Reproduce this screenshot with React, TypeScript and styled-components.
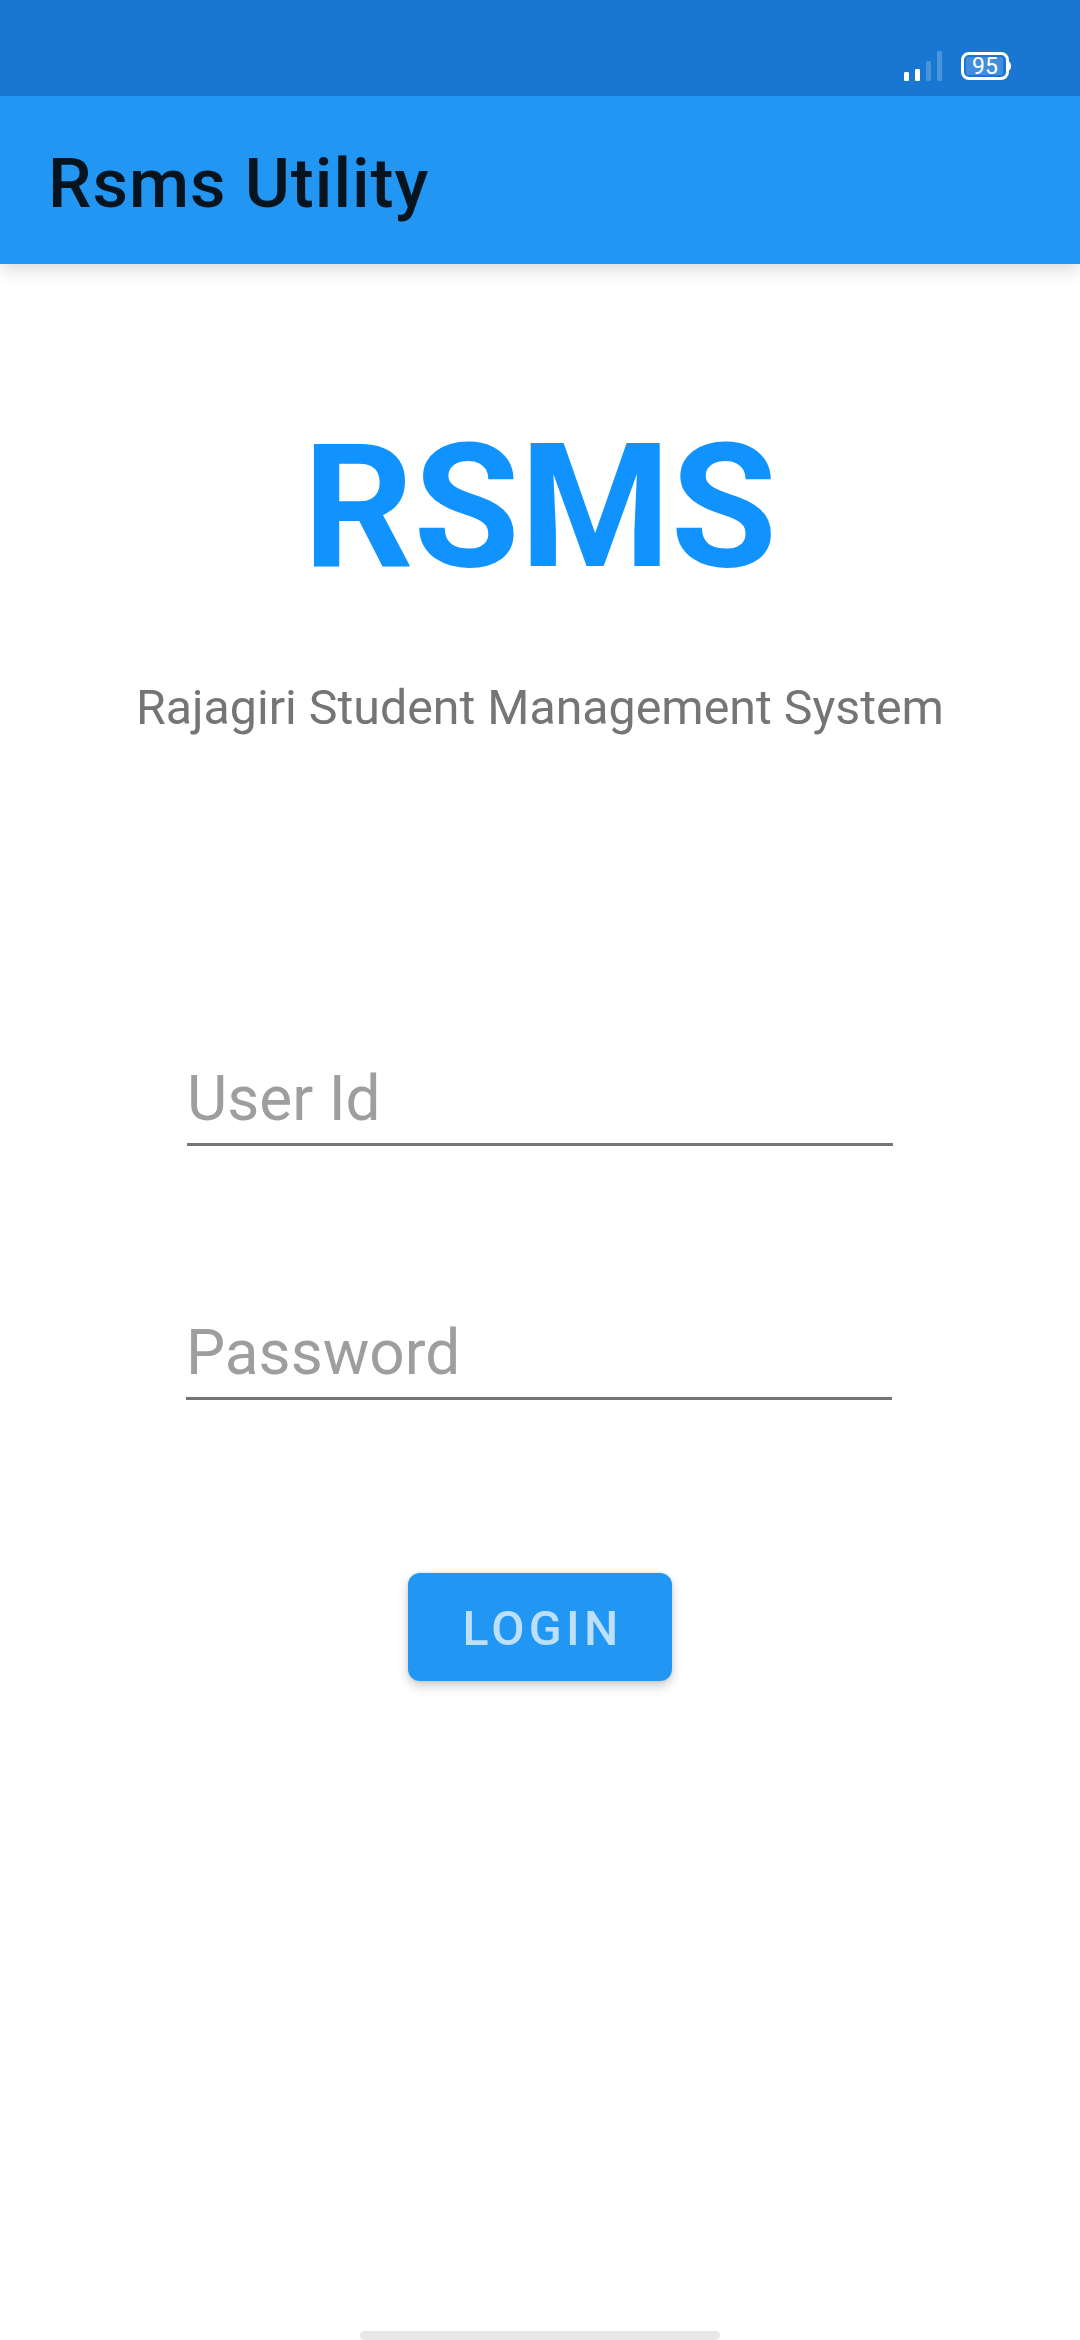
import React from "react";
import styled, { createGlobalStyle } from "styled-components";

const Global = createGlobalStyle`
  * { box-sizing: border-box; }
  body { margin: 0; background: #fff; font-family: Roboto, "Liberation Sans", sans-serif; }
`;
const Screen = styled.div`
  width: 1080px; height: 2340px; display: flex; flex-direction: column;
  background: #fff; overflow: hidden;
`;
const StatusBar = styled.header`
  position: relative; z-index: 1;
  height: 96px; background: #1976d2; display: flex; justify-content: flex-end;
  padding: 51px 69px 0 0; gap: 19px;
`;
const Icon = styled.svg`
  display: block; flex: none;
`;
const AppBar = styled.div`
  height: 168px; background: #2196f3; padding: 0 48px; display: flex; align-items: center;
  box-shadow: 0 4px 18px rgba(0,0,0,.17);
`;
const Title = styled.h1`
  margin: 7px 0 0; font-size: 69px; font-weight: 500; letter-spacing: 1px; line-height: 81px; color: #05141f;
`;
const Main = styled.main`
  flex: 1; display: flex; flex-direction: column; align-items: center;
`;
const Brand = styled.div`
  margin-top: 142px; font-size: 172.5px; line-height: 202px; font-weight: 700; color: #1193ff;
`;
const Subtitle = styled.p`
  margin: 71px 0 0; font-size: 48.3px; line-height: 57px; color: #757575;
`;
const Form = styled.form`
  display: flex; flex-direction: column; align-items: center; width: 706px; margin-top: 326px;
`;
const Field = styled.input<{ $gap?: number; $nudge?: number }>`
  width: 706px; height: 84px; border: 0; border-bottom: 3px solid #757575; padding: 0 0 8px;
  margin: ${(p) => p.$gap ?? 0}px ${(p) => (p.$nudge ?? 0) * 2}px 0 0;
  font: 400 62.1px/73px Roboto, "Liberation Sans", sans-serif; background: none; border-radius: 0; outline: 0;
  &::placeholder { color: #9e9e9e; opacity: 1; }
`;
const Login = styled.button`
  margin-top: 173px; width: 264px; height: 108px; border: 0; border-radius: 12px; padding: 3px 0 0 5px;
  background: #2196f3; color: #bcdffb; font: 500 48.3px/57px Roboto, "Liberation Sans", sans-serif;
  letter-spacing: 0.0893em;
  box-shadow: 0 5px 11px rgba(0,0,0,.2), 0 0 3px rgba(0,0,0,.12);
`;
const HomeBar = styled.div`
  width: 360px; height: 9px; margin-top: auto; border-radius: 5px; background: #e8e8e8;
`;

const signalBars = [
  { x: 0, y: 21, on: true },
  { x: 11, y: 18, on: true },
  { x: 22, y: 10, on: false },
  { x: 33, y: 0, on: false },
];

const Signal = () => (
  <Icon width="38" height="30" viewBox="0 0 38 30">
    {signalBars.map((b) => (
      <rect key={b.x} x={b.x} y={b.y} width="5" height={30 - b.y} rx="1.2" fill="#fff" fillOpacity={b.on ? 1 : 0.21} />
    ))}
  </Icon>
);

const Battery = ({ level }: { level: number }) => (
  <Icon width="50" height="30" viewBox="0 0 50 30">
    <rect x="1.5" y="2.5" width="45" height="25" rx="6.5" fill="none" stroke="#fff" strokeWidth="3" />
    <path d="M47.5 10.5c1.8.5 2.5 1.8 2.5 4.5s-.7 4-2.5 4.500z" fill="#fff" />
    <rect x="5" y="6" width="37" height="18" rx="2.5" fill="#fff" fillOpacity=".18" />
    <text x="24" y="23" textAnchor="middle" fontFamily="Roboto, sans-serif" fontSize="23" fill="#fff">{level}</text>
  </Icon>
);

export default function App() {
  return (
    <Screen>
      <Global />
      <StatusBar><Signal /><Battery level={95} /></StatusBar>
      <AppBar><Title>Rsms Utility</Title></AppBar>
      <Main>
        <Brand>RSMS</Brand>
        <Subtitle>Rajagiri Student Management System</Subtitle>
        <Form>
          <Field placeholder="User Id" />
          <Field placeholder="Password" type="password" $gap={170} $nudge={1} />
          <Login type="button">LOGIN</Login>
        </Form>
        <HomeBar />
      </Main>
    </Screen>
  );
}
